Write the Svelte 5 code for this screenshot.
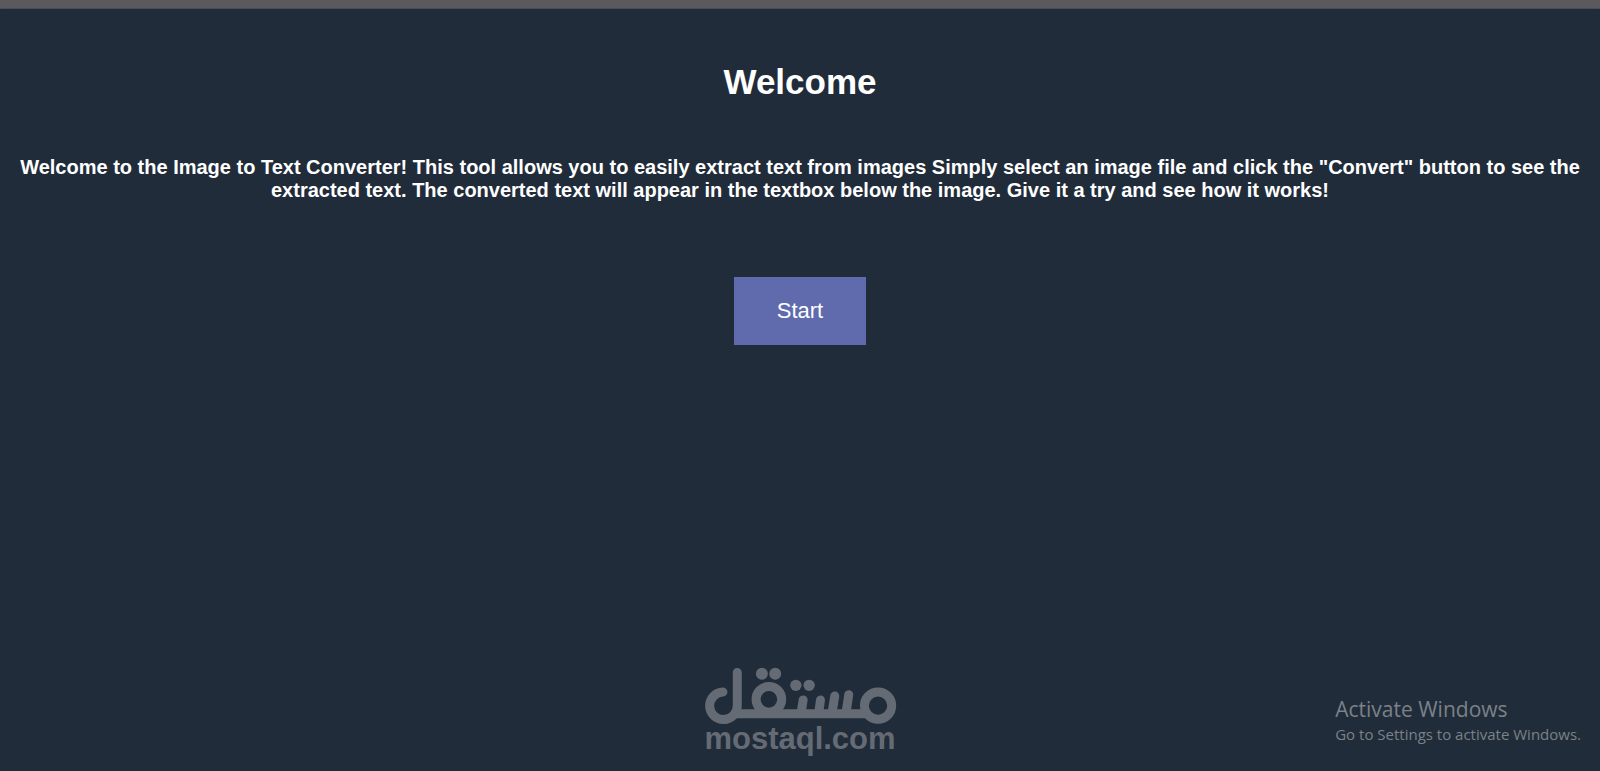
<script>
  let started = $state(false);
</script>

<div class="page">
  <div class="strip"></div>
  <main class="panel">
    <h1>Welcome</h1>
    <p class="intro">
      Welcome to the Image to Text Converter! This tool allows you to easily extract text from images Simply
      select an image file and click the "Convert" button to see the extracted text. The converted text will
      appear in the textbox below the image. Give it a try and see how it works!
    </p>
    <button type="button" class="start" aria-pressed={started} onclick={() => (started = true)}>Start</button>
  </main>

  <div class="brand">
    <svg viewBox="40 36 580 174" aria-hidden="true">
      <g fill="none" stroke="currentColor" stroke-width="27" stroke-linecap="round">
        <path d="M97 111 A41.500 41.500 0 1 0 140 152 V52" />
        <path d="M126 176 H534" stroke-linecap="butt" />
        <circle cx="235" cy="133" r="38.500" />
        <circle cx="563" cy="152" r="41" />
      </g>
      <g fill="none" stroke="currentColor" stroke-width="27" stroke-linecap="round">
        <path d="M338 135 L332 172 M390 135 L385 172 M433 123 L425 172 M475 119 L467 172" />
      </g>
      <g fill="currentColor">
        <circle cx="214" cy="56" r="18" />
        <circle cx="254" cy="56" r="18" />
        <circle cx="316" cy="91" r="17" />
        <circle cx="356" cy="91" r="17" />
      </g>
    </svg>
    <span>mostaql.com</span>
  </div>

  <aside class="activation">
    <div class="title">Activate Windows</div>
    <div class="detail">Go to Settings to activate Windows.</div>
  </aside>
</div>

<style>
  :global(body) {
    background: #212c3a;
  }

  .page {
    position: relative;
    display: flex;
    flex-direction: column;
    min-height: 100vh;
    font-family: "Liberation Sans", Arial, sans-serif;
    color: #fff;
  }

  .strip {
    height: 9px;
    box-sizing: border-box;
    background: #59595e;
    border-bottom: 1px solid #4a4e55;
  }

  .panel {
    flex: 1;
    display: flex;
    flex-direction: column;
    align-items: center;
    padding: 53px 8px 0;
    background: #212c3a;
    border-radius: 4px 4px 0 0;
  }

  h1 {
    margin: 0;
    font-size: 35px;
    line-height: 40px;
  }

  .intro {
    margin: 54px 0 0;
    font-size: 20px;
    font-weight: bold;
    line-height: 23px;
    text-align: center;
  }

  .start {
    margin-top: 75px;
    padding: 20px 43px;
    border: 0;
    background: #5f6bad;
    color: #fff;
    font-family: inherit;
    font-size: 22px;
    line-height: 28px;
    cursor: pointer;
  }

  .brand {
    position: absolute;
    bottom: 18px;
    left: 0;
    right: 0;
    display: flex;
    flex-direction: column;
    align-items: center;
    color: #656b74;
    font-size: 31px;
    font-weight: bold;
    line-height: 28px;
    pointer-events: none;
  }

  .brand svg {
    width: 193px;
    height: 58px;
  }

  .activation {
    position: absolute;
    right: 19px;
    bottom: 26px;
    color: #7b8187;
    font-family: "Open Sans", "Segoe UI", sans-serif;
  }

  .title {
    font-size: 21px;
    line-height: 28px;
  }

  .detail {
    font-size: 15px;
    line-height: 22px;
  }
</style>
